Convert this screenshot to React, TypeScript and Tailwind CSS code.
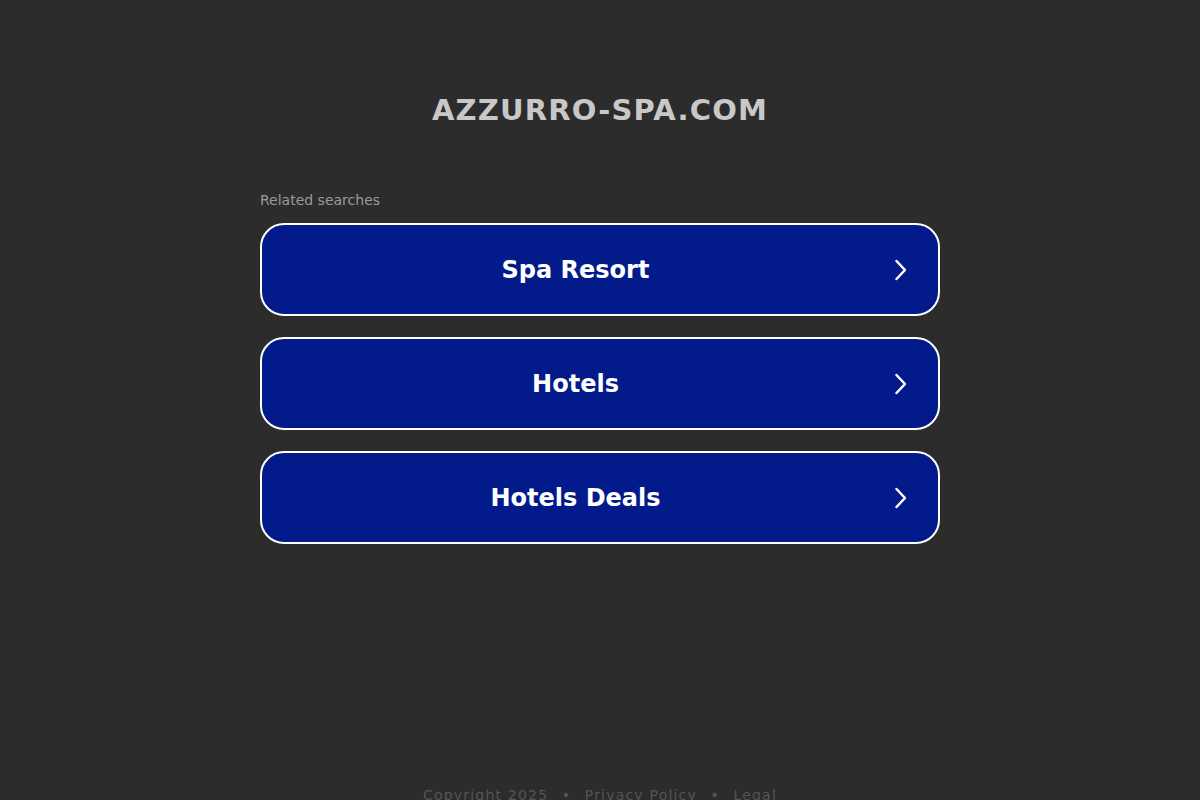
import React from "react";

const items = ["Spa Resort", "Hotels", "Hotels Deals"];

function Chevron() {
  return (
    <svg viewBox="0 0 24 24" className="w-6 h-6 shrink-0 mr-[25px]" fill="none" stroke="white" strokeWidth={2.5} strokeLinecap="round" strokeLinejoin="round">
      <path d="M7.5 3 L16 12 L7.5 21" />
    </svg>
  );
}

export default function App() {
  return (
    <div className="h-[800px] overflow-hidden bg-[#2c2c2c] flex flex-col items-center" style={{ fontFamily: '"DejaVu Sans", Verdana, sans-serif' }}>
      <h1 className="mt-[92px] h-[36px] leading-[36px] text-[29px] font-bold tracking-[1.2px] text-[#c8c8c8]">AZZURRO-SPA.COM</h1>
      <div className="w-[680px] mt-[62px]">
        <div className="h-[20px] leading-[20px] text-[14px] text-[#9a9a9a]">Related searches</div>
        <div className="mt-[13px] flex flex-col gap-[21px]">
          {items.map((t) => (
            <div key={t} className="h-[93px] rounded-[24px] border-2 border-white bg-[#021a8a] flex items-center">
              <span className="flex-1 text-center text-[24px] font-bold text-white">{t}</span>
              <Chevron />
            </div>
          ))}
        </div>
      </div>
      <div className="mt-[241px] h-[20px] leading-[20px] text-[14px] tracking-[1.2px] text-[#555555] flex items-center whitespace-nowrap">
        <span>Copyright 2025</span>
        <span className="mx-[13.5px]">•</span>
        <span>Privacy Policy</span>
        <span className="mx-[13.5px]">•</span>
        <span>Legal</span>
      </div>
    </div>
  );
}
